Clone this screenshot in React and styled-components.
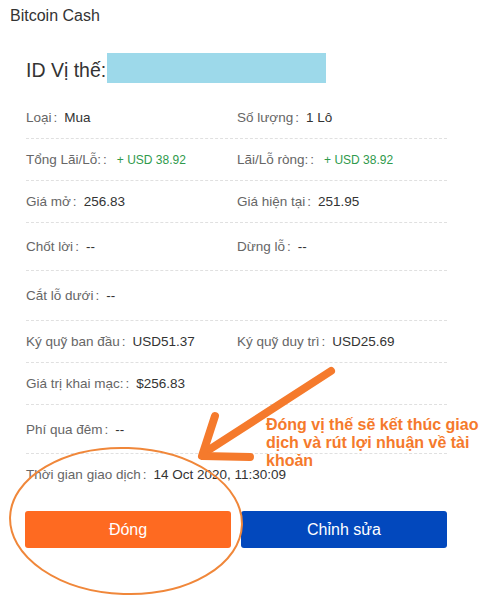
import React from "react";
import styled, { createGlobalStyle } from "styled-components";

const Global = createGlobalStyle`
  html, body { margin: 0; padding: 0; background: #fff; }
  body { font-family: "Liberation Sans", Arial, sans-serif; color: #333; }
`;

const Page = styled.div`
  position: relative;
  width: 483px;
  height: 609px;
  overflow: hidden;
  background: #fff;
`;

const Title = styled.div`
  padding: 8px 10px 0;
  font-size: 16px;
  line-height: 16px;
  color: #333;
`;

const IdRow = styled.div`
  display: flex;
  align-items: flex-end;
  margin-top: 29px;
  padding-left: 26px;
  height: 30px;
`;

const IdLabel = styled.span`
  font-size: 19.5px;
  line-height: 25px;
  color: #333;
`;

const IdMask = styled.span`
  display: block;
  width: 219px;
  height: 30px;
  margin-left: 1px;
  background: #9dd9ea;
`;

const List = styled.div`
  margin-top: 14px;
  padding: 0 36px 0 26px;
`;

const Row = styled.div`
  display: grid;
  grid-template-columns: 211px 1fr;
  align-items: center;
  height: ${(p) => p.$h || 42}px;
  box-sizing: border-box;
  border-bottom: ${(p) => (p.$last ? "none" : "1px dashed #e0e0e0")};
  font-size: 13.5px;
`;

const Cell = styled.div`
  display: flex;
  align-items: baseline;
  white-space: nowrap;
`;

const Label = styled.span`
  color: #666;
`;

const Colon = styled.span`
  color: #666;
  margin: 0 7px 0 2px;
`;

const Value = styled.span`
  color: ${(p) => (p.$green ? "#2f9a4c" : "#333")};
  font-size: ${(p) => (p.$green ? "12px" : "13.5px")};
  margin-left: ${(p) => (p.$green ? "3px" : "0")};
`;

const Buttons = styled.div`
  display: grid;
  grid-template-columns: 206px 206px;
  gap: 10px;
  margin-top: 17px;
  padding-left: 25px;
`;

const Button = styled.button`
  height: 37px;
  border: none;
  border-radius: 3px;
  background: ${(p) => (p.$primary ? "#fe6a21" : "#0248bd")};
  color: #fff;
  font-family: "Liberation Sans", Arial, sans-serif;
  font-size: 16px;
  padding: 0;
`;

const Note = styled.div`
  position: absolute;
  left: 266px;
  top: 416px;
  width: 217px;
  font-size: 16px;
  line-height: 18px;
  font-weight: bold;
  color: #f57a2c;
`;

const Overlay = styled.svg`
  position: absolute;
  left: 0;
  top: 0;
  pointer-events: none;
`;

const Item = ({ label, value, green }) => (
  <Cell>
    <Label>{label}</Label>
    <Colon>:</Colon>
    <Value $green={green}>{value}</Value>
  </Cell>
);

export default function App() {
  return (
    <>
      <Global />
      <Page>
        <Title>Bitcoin Cash</Title>
        <IdRow>
          <IdLabel>ID Vị thế:</IdLabel>
          <IdMask />
        </IdRow>
        <List>
          <Row>
            <Item label="Loại" value="Mua" />
            <Item label="Số lượng" value="1 Lô" />
          </Row>
          <Row>
            <Item label="Tổng Lãi/Lỗ:" value="+ USD 38.92" green />
            <Item label="Lãi/Lỗ ròng:" value="+ USD 38.92" green />
          </Row>
          <Row>
            <Item label="Giá mở" value="256.83" />
            <Item label="Giá hiện tại" value="251.95" />
          </Row>
          <Row $h={48}>
            <Item label="Chốt lời" value="--" />
            <Item label="Dừng lỗ" value="--" />
          </Row>
          <Row $h={50}>
            <Item label="Cắt lỗ dưới" value="--" />
          </Row>
          <Row>
            <Item label="Ký quỹ ban đầu" value="USD51.37" />
            <Item label="Ký quỹ duy trì" value="USD25.69" />
          </Row>
          <Row>
            <Item label="Giá trị khai mạc:" value="$256.83" />
          </Row>
          <Row $h={49}>
            <Item label="Phí qua đêm" value="--" />
          </Row>
          <Row $h={40} $last>
            <Item label="Thời gian giao dịch" value="14 Oct 2020, 11:30:09" />
          </Row>
        </List>
        <Buttons>
          <Button $primary>Đóng</Button>
          <Button>Chỉnh sửa</Button>
        </Buttons>
        <Note>Đóng vị thế sẽ kết thúc giao dịch và rút lợi nhuận về tài khoản</Note>
        <Overlay width="483" height="609" viewBox="0 0 483 609">
          <ellipse cx="126" cy="521" rx="116" ry="73" fill="none" stroke="#f0873a" strokeWidth="2" transform="rotate(2 126 521)" />
          <g stroke="#f57a2c" strokeWidth="8" strokeLinecap="round" strokeLinejoin="round" fill="none">
            <line x1="331" y1="371" x2="204" y2="453" />
            <polyline points="215,416 202,456 250,457" />
          </g>
        </Overlay>
      </Page>
    </>
  );
}
